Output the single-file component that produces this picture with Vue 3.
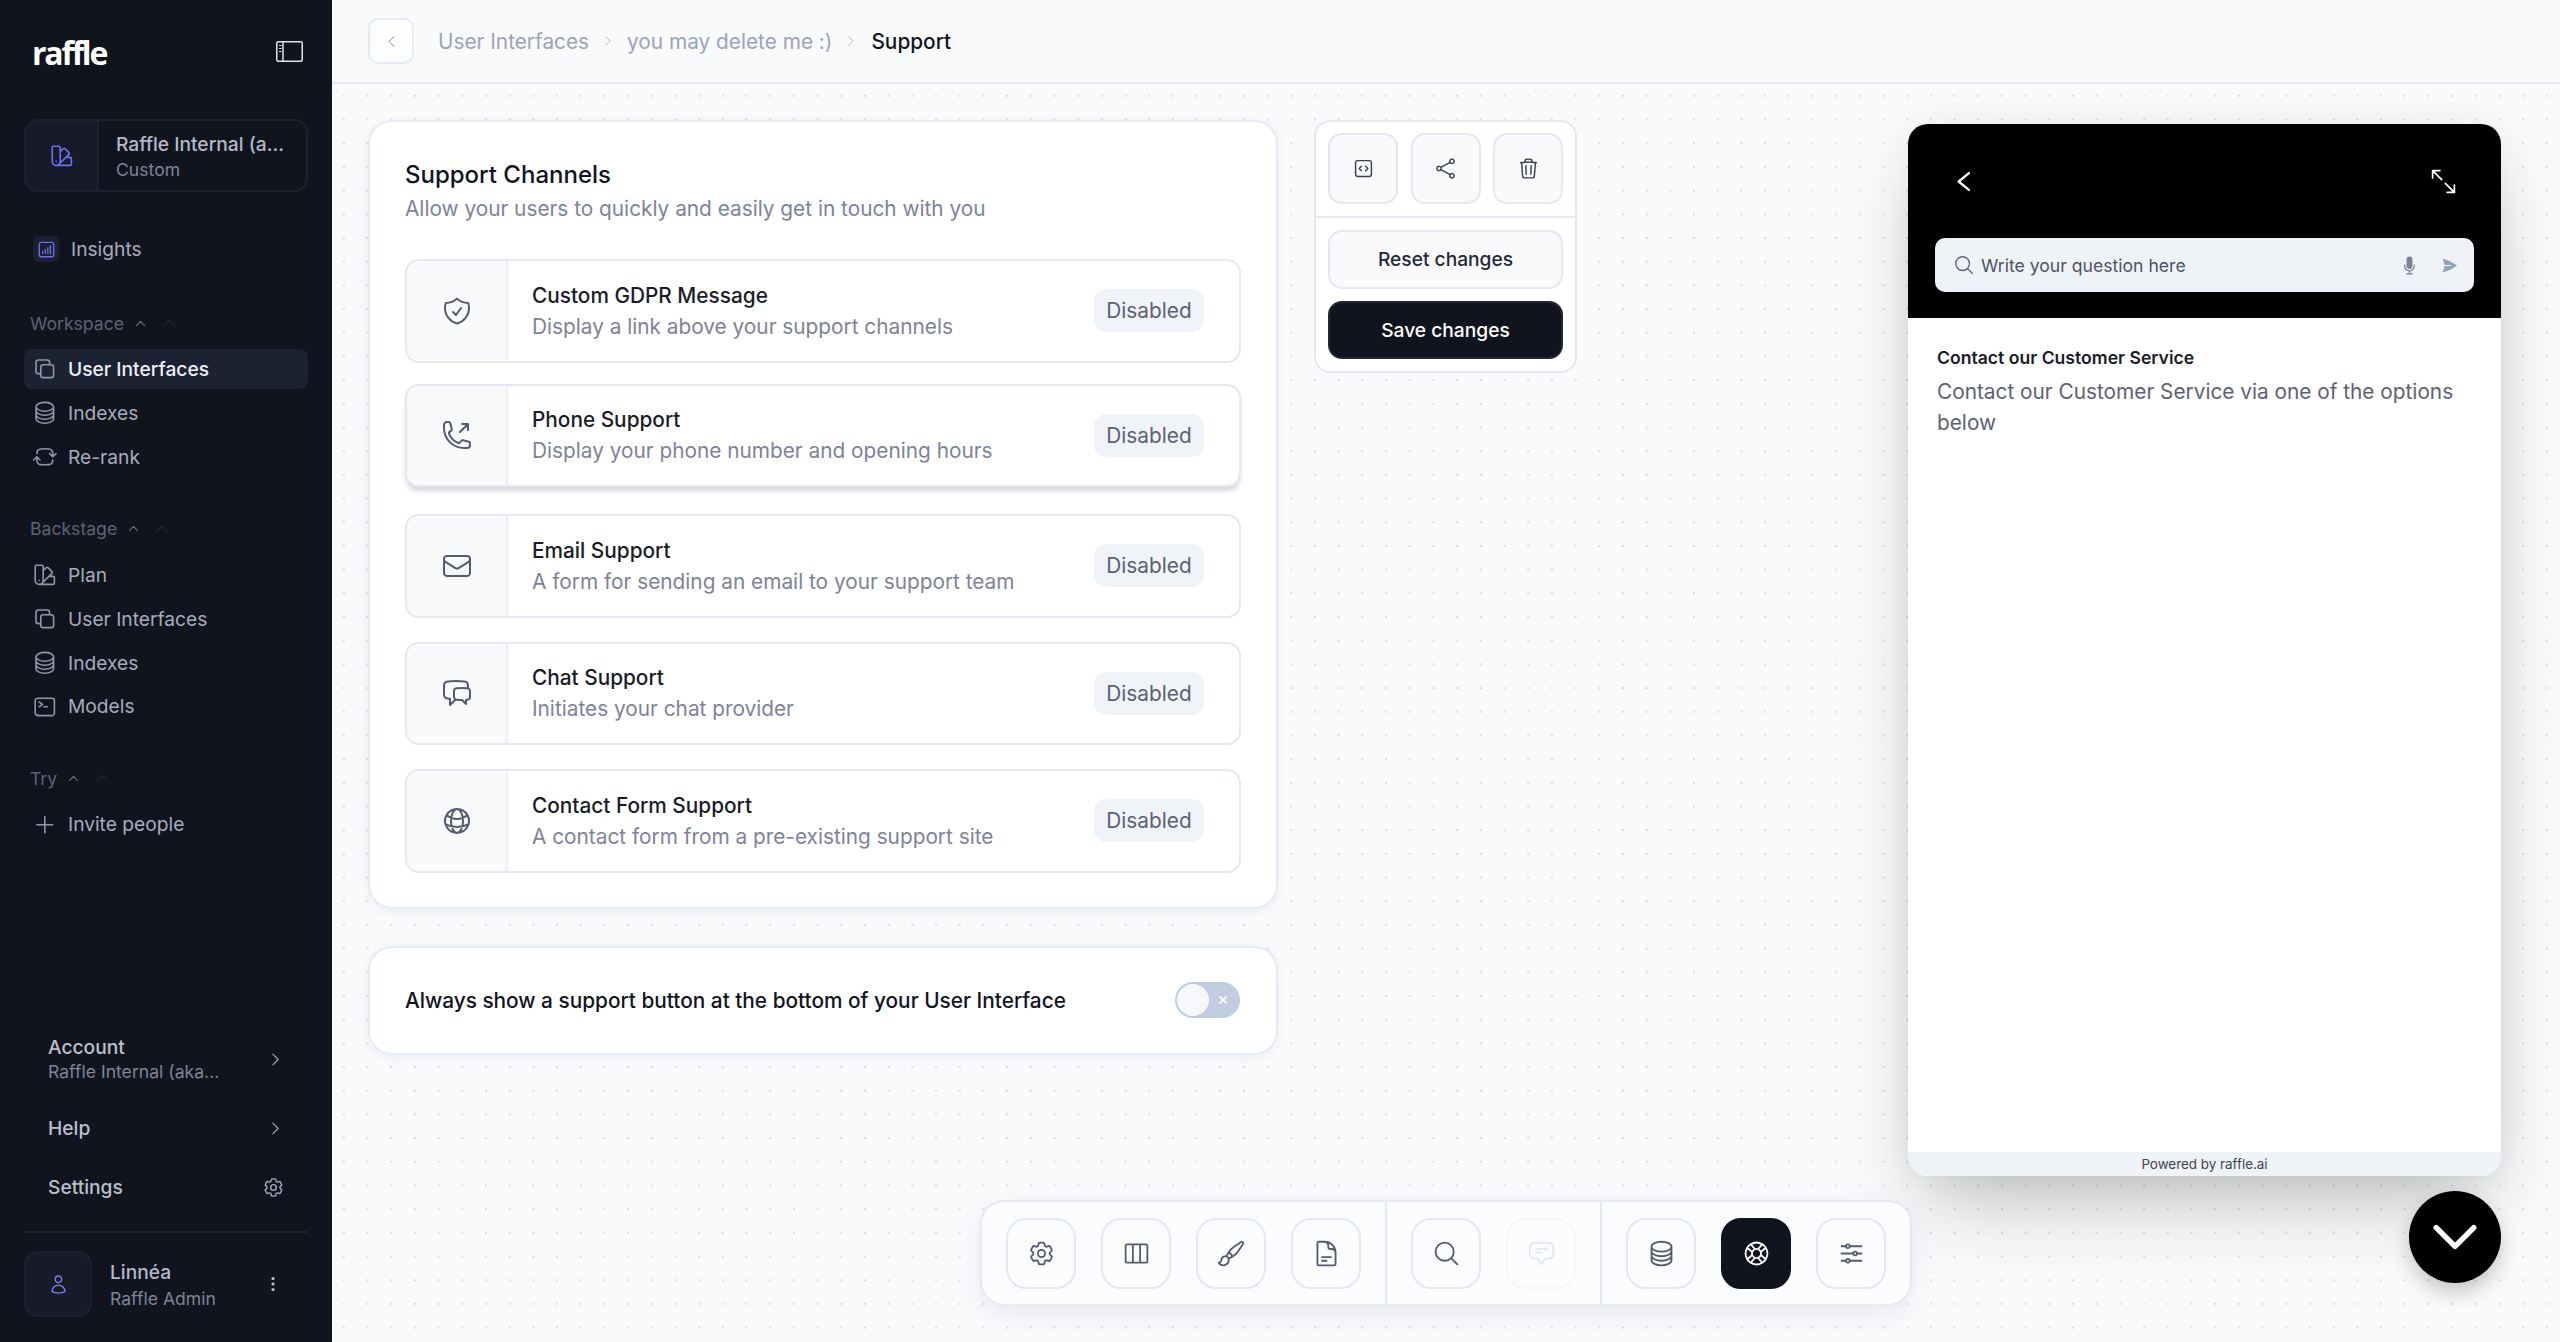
<script setup>
import { h } from 'vue'

const ICONS = {
  gear: 'M9.594 3.94c.09-.542.56-.94 1.11-.94h2.593c.55 0 1.02.398 1.11.94l.213 1.281c.063.374.313.686.645.87.074.04.147.083.22.127.325.196.72.257 1.075.124l1.217-.456a1.125 1.125 0 0 1 1.37.49l1.296 2.247a1.125 1.125 0 0 1-.26 1.431l-1.003.827c-.293.241-.438.613-.43.992a7.723 7.723 0 0 1 0 .255c-.008.378.137.75.43.991l1.004.827c.424.35.534.955.26 1.43l-1.298 2.247a1.125 1.125 0 0 1-1.369.491l-1.217-.456c-.355-.133-.75-.072-1.076.124a6.47 6.47 0 0 1-.22.128c-.331.183-.581.495-.644.869l-.213 1.281c-.09.543-.56.94-1.11.94h-2.594c-.55 0-1.019-.398-1.11-.94l-.213-1.281c-.062-.374-.312-.686-.644-.87a6.52 6.52 0 0 1-.22-.127c-.325-.196-.72-.257-1.076-.124l-1.217.456a1.125 1.125 0 0 1-1.369-.49l-1.297-2.247a1.125 1.125 0 0 1 .26-1.431l1.004-.827c.292-.24.437-.613.43-.991a6.932 6.932 0 0 1 0-.255c.007-.38-.138-.751-.43-.992l-1.004-.827a1.125 1.125 0 0 1-.26-1.43l1.297-2.247a1.125 1.125 0 0 1 1.37-.491l1.216.456c.356.133.751.072 1.076-.124.072-.044.146-.086.22-.128.332-.183.582-.495.644-.869l.214-1.28ZM15 12a3 3 0 1 1-6 0 3 3 0 0 1 6 0Z',
  db: 'M20.25 6.375c0 2.278-3.694 4.125-8.25 4.125S3.75 8.653 3.75 6.375m16.5 0c0-2.278-3.694-4.125-8.25-4.125S3.75 4.097 3.75 6.375m16.5 0v11.25c0 2.278-3.694 4.125-8.25 4.125s-8.25-1.847-8.25-4.125V6.375m16.5 0v3.75m-16.5-3.75v3.75m16.5 0v3.75C20.25 16.153 16.556 18 12 18s-8.25-1.847-8.25-4.125v-3.75m16.5 0c0 2.278-3.694 4.125-8.25 4.125s-8.25-1.847-8.25-4.125',
  buoy: 'M16.712 4.33a9.027 9.027 0 0 1 1.652 1.306c.51.51.944 1.064 1.306 1.652M16.712 4.33l-3.448 4.138m3.448-4.138a9.014 9.014 0 0 0-9.424 0M19.67 7.288l-4.138 3.448m4.138-3.448a9.014 9.014 0 0 1 0 9.424m-4.138-5.976a3.736 3.736 0 0 0-.88-1.388 3.737 3.737 0 0 0-1.388-.88m2.268 2.268a3.765 3.765 0 0 1 0 2.528m-2.268-4.796a3.765 3.765 0 0 0-2.528 0m4.796 4.796c-.181.506-.475.982-.88 1.388a3.736 3.736 0 0 1-1.388.88m2.268-2.268 4.138 3.448m0 0a9.027 9.027 0 0 1-1.306 1.652c-.51.51-1.064.944-1.652 1.306m0 0-3.448-4.138m3.448 4.138a9.014 9.014 0 0 1-9.424 0m5.976-4.138a3.765 3.765 0 0 1-2.528 0m0 0a3.736 3.736 0 0 1-1.388-.88 3.737 3.737 0 0 1-.88-1.388m2.268 2.268L7.288 19.67m0 0a9.024 9.024 0 0 1-1.652-1.306 9.027 9.027 0 0 1-1.306-1.652m0 0 4.138-3.448M4.33 16.712a9.014 9.014 0 0 1 0-9.424m4.138 5.976a3.765 3.765 0 0 1 0-2.528m0 0c.181-.506.475-.982.88-1.388a3.736 3.736 0 0 1 1.388-.88m-2.268 2.268L4.33 7.288m6.406 1.18L7.288 4.33m0 0a9.024 9.024 0 0 0-1.652 1.306A9.025 9.025 0 0 0 4.33 7.288',
  search: 'm21 21-5.197-5.197m0 0A7.5 7.5 0 1 0 5.196 5.196a7.5 7.5 0 0 0 10.607 10.607Z',
  share: 'M7.217 10.907a2.25 2.25 0 1 0 0 2.186m0-2.186c.18.324.283.696.283 1.093s-.103.77-.283 1.093m0-2.186 9.566-5.314m-9.566 7.5 9.566 5.314m0 0a2.25 2.25 0 1 0 3.935 2.186 2.25 2.25 0 0 0-3.935-2.186Zm0-12.814a2.25 2.25 0 1 0 3.933-2.185 2.25 2.25 0 0 0-3.933 2.185Z',
  trash: 'm14.74 9-.346 9m-4.788 0L9.26 9m9.968-3.21c.342.052.682.107 1.022.166m-1.022-.165L18.16 19.673a2.25 2.25 0 0 1-2.244 2.077H8.084a2.25 2.25 0 0 1-2.244-2.077L4.772 5.79m14.456 0a48.108 48.108 0 0 0-3.478-.397m-12 .562c.34-.059.68-.114 1.022-.165m0 0a48.11 48.11 0 0 1 3.478-.397m7.5 0v-.916c0-1.18-.91-2.164-2.09-2.201a51.964 51.964 0 0 0-3.32 0c-1.18.037-2.09 1.022-2.09 2.201v.916m7.5 0a48.667 48.667 0 0 0-7.5 0',
  mail: 'M21.75 6.75v10.5a2.25 2.25 0 0 1-2.25 2.25h-15a2.25 2.25 0 0 1-2.25-2.25V6.75m19.5 0A2.25 2.25 0 0 0 19.5 4.5h-15a2.25 2.25 0 0 0-2.25 2.25m19.5 0v.243a2.25 2.25 0 0 1-1.07 1.916l-7.5 4.615a2.25 2.25 0 0 1-2.36 0L3.32 8.91a2.25 2.25 0 0 1-1.07-1.916V6.75',
  shield: 'M9 12.75 11.25 15 15 9.75m-3-7.036A11.959 11.959 0 0 1 3.598 6 11.99 11.99 0 0 0 3 9.749c0 5.592 3.824 10.29 9 11.623 5.176-1.332 9-6.03 9-11.622 0-1.31-.21-2.571-.598-3.751h-.152c-3.196 0-6.1-1.248-8.25-3.285Z',
  phone: 'M20.25 3.75v4.5m0-4.5h-4.5m4.5 0-6 6m3 12c-8.284 0-15-6.716-15-15V4.5A2.25 2.25 0 0 1 4.5 2.25h1.372c.516 0 .966.351 1.091.852l1.106 4.423c.11.44-.054.902-.417 1.173l-1.293.97a1.062 1.062 0 0 0-.38 1.21 12.035 12.035 0 0 0 7.143 7.143c.441.162.928-.004 1.21-.38l.97-1.293a1.125 1.125 0 0 1 1.173-.417l4.423 1.106c.5.125.852.575.852 1.091V19.5a2.25 2.25 0 0 1-2.25 2.25h-2.25Z',
  chats: 'M20.25 8.511c.884.284 1.5 1.128 1.5 2.097v4.286c0 1.136-.847 2.1-1.98 2.193-.34.027-.68.052-1.02.072v3.091l-3-3c-1.354 0-2.694-.055-4.02-.163a2.115 2.115 0 0 1-.825-.242m9.345-8.334a2.126 2.126 0 0 0-.476-.095 48.64 48.64 0 0 0-8.048 0c-1.131.094-1.976 1.057-1.976 2.192v4.286c0 .837.46 1.58 1.155 1.951m9.345-8.334V6.637c0-1.621-1.152-3.026-2.76-3.235A48.455 48.455 0 0 0 11.25 3c-2.115 0-4.198.137-6.24.402-1.608.209-2.76 1.614-2.76 3.235v6.226c0 1.621 1.152 3.026 2.76 3.235.577.075 1.157.14 1.74.194V21l4.155-4.155',
  globe: 'M12 21a9.004 9.004 0 0 0 8.716-6.747M12 21a9.004 9.004 0 0 1-8.716-6.747M12 21c2.485 0 4.5-4.03 4.5-9S14.485 3 12 3m0 18c-2.485 0-4.5-4.03-4.5-9S9.515 3 12 3m0 0a8.997 8.997 0 0 1 7.843 4.582M12 3a8.997 8.997 0 0 0-7.843 4.582m15.686 0A11.953 11.953 0 0 1 12 10.5c-2.998 0-5.74-1.1-7.843-2.918m15.686 0A8.959 8.959 0 0 1 21 12c0 .778-.099 1.533-.284 2.253m0 0A17.919 17.919 0 0 1 12 16.5c-3.162 0-6.133-.815-8.716-2.247m0 0A9.015 9.015 0 0 1 3 12c0-1.605.42-3.113 1.157-4.418',
  swatch: 'M4.098 19.902a3.75 3.75 0 0 0 5.304 0l6.401-6.402M6.75 21A3.75 3.75 0 0 1 3 17.25V4.125C3 3.504 3.504 3 4.125 3h5.25c.621 0 1.125.504 1.125 1.125v4.072M6.75 21a3.75 3.75 0 0 0 3.75-3.75V8.197M6.75 21h13.125c.621 0 1.125-.504 1.125-1.125v-5.25c0-.621-.504-1.125-1.125-1.125h-4.072M10.5 8.197l2.88-2.88c.438-.439 1.15-.439 1.59 0l3.712 3.713c.44.44.44 1.152 0 1.59l-2.879 2.88M6.75 17.25h.008v.008H6.75v-.008Z',
  stack: 'M16.5 8.25V6a2.25 2.25 0 0 0-2.25-2.25H6A2.25 2.25 0 0 0 3.75 6v8.25A2.25 2.25 0 0 0 6 16.5h2.25m8.25-8.25H18a2.25 2.25 0 0 1 2.25 2.25V18A2.25 2.25 0 0 1 18 20.25h-7.5A2.25 2.25 0 0 1 8.25 18v-1.5m8.25-8.25h-6a2.25 2.25 0 0 0-2.25 2.25v6',
  rerank: 'M19.5 12c0-1.232-.046-2.453-.138-3.662a4.006 4.006 0 0 0-3.7-3.7 48.678 48.678 0 0 0-7.324 0 4.006 4.006 0 0 0-3.7 3.7c-.017.22-.032.441-.046.662M19.5 12l3-3m-3 3-3-3m-12 3c0 1.232.046 2.453.138 3.662a4.006 4.006 0 0 0 3.7 3.7 48.656 48.656 0 0 0 7.324 0 4.006 4.006 0 0 0 3.7-3.7c.017-.22.032-.441.046-.662M4.5 12l3 3m-3-3-3 3',
  term: 'm6.75 7.5 3 2.25-3 2.25m4.5 0h3m-9 8.25h13.5A2.25 2.25 0 0 0 21 17.75V6.25A2.25 2.25 0 0 0 18.75 4H5.25A2.25 2.25 0 0 0 3 6.25v11.5A2.25 2.25 0 0 0 5.25 20Z',
  plus: 'M12 4.5v15m7.5-7.5h-15',
  user: 'M15.75 6a3.75 3.75 0 1 1-7.5 0 3.75 3.75 0 0 1 7.5 0ZM4.501 20.118a7.5 7.5 0 0 1 14.998 0A17.933 17.933 0 0 1 12 21.75c-2.676 0-5.216-.584-7.499-1.632Z',
  dots: 'M12 6.75a.75.75 0 1 1 0-1.5.75.75 0 0 1 0 1.5ZM12 12.75a.75.75 0 1 1 0-1.5.75.75 0 0 1 0 1.5ZM12 18.75a.75.75 0 1 1 0-1.5.75.75 0 0 1 0 1.5Z',
  code: 'M14.25 9.75 16.5 12l-2.25 2.25m-4.5 0L7.5 12l2.25-2.25M6 20.25h12A2.25 2.25 0 0 0 20.25 18V6A2.25 2.25 0 0 0 18 3.75H6A2.25 2.25 0 0 0 3.75 6v12A2.25 2.25 0 0 0 6 20.25Z',
  columns: 'M9 4.5v15m6-15v15m-10.875 0h15.75c.621 0 1.125-.504 1.125-1.125V5.625c0-.621-.504-1.125-1.125-1.125H4.125C3.504 4.5 3 5.004 3 5.625v12.75c0 .621.504 1.125 1.125 1.125Z',
  brush: 'M9.53 16.122a3 3 0 0 0-5.78 1.128 2.25 2.25 0 0 1-2.4 2.245 4.5 4.5 0 0 0 8.4-2.245c0-.399-.078-.78-.22-1.128Zm0 0a15.998 15.998 0 0 0 3.388-1.62m-5.043-.025a15.994 15.994 0 0 1 1.622-3.395m3.42 3.42a15.995 15.995 0 0 0 4.764-4.648l3.876-5.814a1.151 1.151 0 0 0-1.597-1.597L14.146 6.32a15.996 15.996 0 0 0-4.649 4.763m3.42 3.42a6.776 6.776 0 0 0-3.42-3.42',
  doc: 'M19.5 14.25v-2.625a3.375 3.375 0 0 0-3.375-3.375h-1.5A1.125 1.125 0 0 1 13.5 7.125v-1.5a3.375 3.375 0 0 0-3.375-3.375H8.25m0 12.75h7.5m-7.5 3H12M10.5 2.25H5.625c-.621 0-1.125.504-1.125 1.125v17.25c0 .621.504 1.125 1.125 1.125h12.75c.621 0 1.125-.504 1.125-1.125V11.25a9 9 0 0 0-9-9Z',
  chat: 'M7.5 8.25h9m-9 3H12m-9.75 1.51c0 1.6 1.123 2.994 2.707 3.227 1.129.166 2.27.293 3.423.379.35.026.67.21.865.501L12 21l2.755-4.133a1.14 1.14 0 0 1 .865-.501 48.172 48.172 0 0 0 3.423-.379c1.584-.233 2.707-1.626 2.707-3.228V6.741c0-1.602-1.123-2.995-2.707-3.228A48.394 48.394 0 0 0 12 3c-2.392 0-4.744.175-7.043.513C3.373 3.746 2.25 5.14 2.25 6.741v6.018Z',
  sliders: 'M10.5 6h9.75M10.5 6a1.5 1.5 0 1 1-3 0m3 0a1.5 1.5 0 1 0-3 0M3.75 6H7.5m3 12h9.75m-9.75 0a1.5 1.5 0 0 1-3 0m3 0a1.5 1.5 0 0 0-3 0m-3.75 0H7.5m9-6h3.75m-3.75 0a1.5 1.5 0 0 1-3 0m3 0a1.5 1.5 0 0 0-3 0m-9.75 0h9.75',
  chart: 'M7.5 14.25v2.25m3-4.5v4.5m3-6.75v6.75m3-9v9M6 20.25h12A2.25 2.25 0 0 0 20.25 18V6A2.25 2.25 0 0 0 18 3.75H6A2.25 2.25 0 0 0 3.75 6v12A2.25 2.25 0 0 0 6 20.25Z',
  up: 'm4.5 15.75 7.5-7.5 7.5 7.5',
  right: 'm8.25 4.5 7.5 7.5-7.5 7.5',
  left: 'M15.75 19.5 8.25 12l7.5-7.5',
  wleft: 'M16.5 5 8 12l8.5 7',
  down: 'm19.5 8.25-7.5 7.5-7.5-7.5',
  expand: 'M3 3v6M3 3h6M3 3l7.5 7.5M21 21v-6M21 21h-6M21 21l-7.5-7.5',
  mic: 'M8.25 4.5a3.75 3.75 0 1 1 7.5 0v8.25a3.75 3.75 0 1 1-7.5 0V4.5ZM6 10.5a.75.75 0 0 1 .75.75v1.5a5.25 5.25 0 1 0 10.5 0v-1.5a.75.75 0 0 1 1.5 0v1.5a6.751 6.751 0 0 1-6 6.709v2.291h3a.75.75 0 0 1 0 1.5h-7.5a.75.75 0 0 1 0-1.5h3v-2.291a6.751 6.751 0 0 1-6-6.709v-1.5A.75.75 0 0 1 6 10.5Z',
  send: 'M3.478 2.404a.75.75 0 0 0-.926.941l2.432 7.905H13.5a.75.75 0 0 1 0 1.5H4.984l-2.432 7.905a.75.75 0 0 0 .926.94 60.519 60.519 0 0 0 18.445-8.986.75.75 0 0 0 0-1.218A60.517 60.517 0 0 0 3.478 2.404Z',
}

const Ico = (p) =>
  h('svg', {
    viewBox: '0 0 24 24',
    width: p.size,
    height: p.size,
    fill: p.solid !== undefined ? 'currentColor' : 'none',
    stroke: p.solid !== undefined ? 'none' : 'currentColor',
    'stroke-width': p.sw || 1.5,
    'stroke-linecap': 'round',
    'stroke-linejoin': 'round',
  }, [h('path', { d: ICONS[p.name] })])

const navGroups = [
  { label: 'Workspace', items: [
    { icon: 'stack', text: 'User Interfaces', active: true },
    { icon: 'db', text: 'Indexes' },
    { icon: 'rerank', text: 'Re-rank' },
  ] },
  { label: 'Backstage', items: [
    { icon: 'swatch', text: 'Plan' },
    { icon: 'stack', text: 'User Interfaces' },
    { icon: 'db', text: 'Indexes' },
    { icon: 'term', text: 'Models' },
  ] },
  { label: 'Try', items: [
    { icon: 'plus', text: 'Invite people' },
  ] },
]

const channels = [
  { icon: 'shield', title: 'Custom GDPR Message', sub: 'Display a link above your support channels' },
  { icon: 'phone', title: 'Phone Support', sub: 'Display your phone number and opening hours', lifted: true },
  { icon: 'mail', title: 'Email Support', sub: 'A form for sending an email to your support team' },
  { icon: 'chats', title: 'Chat Support', sub: 'Initiates your chat provider' },
  { icon: 'globe', title: 'Contact Form Support', sub: 'A contact form from a pre-existing support site' },
]

const toolGroups = [
  [{ icon: 'gear' }, { icon: 'columns' }, { icon: 'brush' }, { icon: 'doc' }],
  [{ icon: 'search' }, { icon: 'chat', disabled: true }],
  [{ icon: 'db' }, { icon: 'buoy', active: true }, { icon: 'sliders' }],
]
</script>

<template>
  <div class="app">
    <aside class="sidebar">
      <div class="brand">
        <span class="logo">raffle</span>
        <svg class="panel-ico" width="27" height="21" viewBox="0 0 27 21" fill="none" stroke="currentColor">
          <rect x="0.75" y="0.75" width="25.5" height="19.5" rx="1.5" stroke-width="1.5" />
          <path d="M7 1v19" stroke-width="1.5" />
          <path d="M3 4.5h2.5M3 7.5h2.5M3 10.5h2.5" stroke-width="1.2" />
        </svg>
      </div>

      <div class="org">
        <div class="org-ico"><Ico name="swatch" size="25.6" /></div>
        <div class="org-text">
          <div class="org-name">Raffle Internal (a...</div>
          <div class="org-type">Custom</div>
        </div>
      </div>

      <div class="insights">
        <span class="insights-ico"><Ico name="chart" size="21" /></span>
        <span>Insights</span>
      </div>

      <section v-for="g in navGroups" :key="g.label" class="nav-group">
        <div class="nav-label">
          <span>{{ g.label }}</span>
          <Ico name="up" size="13" sw="2" class="caret" />
          <Ico name="up" size="18" sw="2" class="caret-ghost" />
        </div>
        <div class="nav-items">
          <div v-for="it in g.items" :key="it.text" class="nav-item" :class="{ active: it.active }">
            <Ico :name="it.icon" size="25.6" />
            <span>{{ it.text }}</span>
          </div>
        </div>
      </section>

      <div class="side-bottom">
        <div class="bottom-row account">
          <div>
            <div class="bottom-title">Account</div>
            <div class="bottom-sub">Raffle Internal (aka...</div>
          </div>
          <Ico name="right" size="17" class="bottom-ico" />
        </div>
        <div class="bottom-row help">
          <div class="bottom-title">Help</div>
          <Ico name="right" size="17" class="bottom-ico" />
        </div>
        <div class="bottom-row settings">
          <div class="bottom-title">Settings</div>
          <Ico name="gear" size="23" class="bottom-ico gear" />
        </div>
        <div class="user">
          <div class="avatar"><Ico name="user" size="21" /></div>
          <div class="user-text">
            <div class="user-name">Linnéa</div>
            <div class="user-role">Raffle Admin</div>
          </div>
          <Ico name="dots" size="22" sw="2" class="user-dots" />
        </div>
      </div>
    </aside>

    <main class="main">
      <header class="topbar">
        <button class="back"><Ico name="left" size="15" /></button>
        <nav class="crumbs">
          <span>User Interfaces</span>
          <Ico name="right" size="14" class="crumb-sep" />
          <span>you may delete me :)</span>
          <Ico name="right" size="14" class="crumb-sep" />
          <span class="current">Support</span>
        </nav>
      </header>

      <div class="canvas">
        <div class="left-col">
          <section class="card channels">
            <h2>Support Channels</h2>
            <p class="lead">Allow your users to quickly and easily get in touch with you</p>
            <div class="rows">
              <div v-for="c in channels" :key="c.title" class="row" :class="{ lifted: c.lifted }">
                <div class="row-ico"><Ico :name="c.icon" size="32" /></div>
                <div class="row-text">
                  <div class="row-title">{{ c.title }}</div>
                  <div class="row-sub">{{ c.sub }}</div>
                </div>
                <span class="badge">Disabled</span>
              </div>
            </div>
          </section>

          <section class="card always">
            <span>Always show a support button at the bottom of your User Interface</span>
            <span class="toggle"><i class="knob"></i><b class="toggle-x">×</b></span>
          </section>
        </div>

        <aside class="actions">
          <div class="actions-top">
            <button class="act"><Ico name="code" size="23" /></button>
            <button class="act"><Ico name="share" size="23" /></button>
            <button class="act"><Ico name="trash" size="23" /></button>
          </div>
          <div class="actions-bottom">
            <button class="wide">Reset changes</button>
            <button class="wide primary">Save changes</button>
          </div>
        </aside>

        <section class="widget">
          <div class="widget-head">
            <div class="widget-nav">
              <Ico name="wleft" size="29" sw="1.9" />
              <Ico name="expand" size="29" sw="1.4" />
            </div>
            <div class="widget-search">
              <Ico name="search" size="22" class="w-search" />
              <span class="w-placeholder">Write your question here</span>
              <Ico name="mic" size="19" solid class="w-mic" />
              <Ico name="send" size="17" solid class="w-send" />
            </div>
          </div>
          <div class="widget-body">
            <div class="w-title">Contact our Customer Service</div>
            <p class="w-text">Contact our Customer Service via one of the options below</p>
          </div>
          <div class="widget-foot">Powered by raffle.ai</div>
        </section>

        <div class="toolbar">
          <div v-for="(g, i) in toolGroups" :key="i" class="tool-group">
            <button
              v-for="t in g"
              :key="t.icon"
              class="tool"
              :class="{ active: t.active, disabled: t.disabled }"
            >
              <Ico :name="t.icon" size="29" />
            </button>
          </div>
        </div>

        <button class="fab"><Ico name="down" size="60" sw="2.2" /></button>
      </div>
    </main>
  </div>
</template>

<style>
html, body { background: #f9fafc; }
</style>

<style scoped>
* { box-sizing: border-box; }
button { font: inherit; padding: 0; cursor: pointer; }
h2, p { margin: 0; }
svg { display: block; flex: none; }

.app {
  display: flex;
  width: 100vw;
  height: 100vh;
  overflow: hidden;
  font-family: Inter, "Noto Sans", sans-serif;
  color: #11141f;
}

/* Sidebar */
.sidebar {
  width: 332px;
  flex: none;
  background: #11141f;
  padding: 40px 24px 25px;
  display: flex;
  flex-direction: column;
  color: #a7acbd;
}
.brand {
  display: flex;
  align-items: center;
  justify-content: space-between;
  height: 26px;
  padding: 0 5px 0 8px;
  color: #fff;
}
.logo {
  font-family: "Open Sans", sans-serif;
  font-weight: 700;
  font-size: 32px;
  letter-spacing: -2.2px;
  line-height: 26px;
  color: #fff;
}
.panel-ico { color: #dfe3ec; margin-top: -4px; }

.org {
  display: flex;
  height: 73px;
  margin-top: 53px;
  border: 2px solid #1c2130;
  border-radius: 14px;
  overflow: hidden;
}
.org-ico {
  width: 73px;
  background: #171b29;
  border-right: 2px solid #1c2130;
  display: flex;
  align-items: center;
  justify-content: center;
  color: #6c6ff0;
}
.org-text { padding: 2px 0 0 17px; display: flex; flex-direction: column; justify-content: center; }
.org-name { font-size: 19.2px; line-height: 27px; font-weight: 500; color: #b4b9c8; white-space: nowrap; }
.org-type { font-size: 17.6px; line-height: 24px; color: #7f8496; }

.insights {
  display: flex;
  align-items: center;
  gap: 12px;
  height: 26px;
  margin-top: 44px;
  padding-left: 9px;
  font-size: 19.2px;
  color: #a7acbd;
}
.insights-ico {
  width: 26px;
  height: 26px;
  background: #1c2030;
  border-radius: 5px;
  display: flex;
  align-items: center;
  justify-content: center;
  color: #6c6ff0;
}

.nav-group { margin-top: 40px; }
.nav-group:first-of-type { margin-top: 49px; }
.nav-label {
  display: flex;
  align-items: center;
  height: 24px;
  padding-left: 6px;
  font-size: 17.6px;
  color: #5f6274;
}
.caret { margin-left: 10px; color: #6d7080; }
.caret-ghost { margin-left: 13px; color: #1e2230; }
.nav-items { margin-top: 14px; display: flex; flex-direction: column; gap: 3.9px; }
.nav-item {
  display: flex;
  align-items: center;
  gap: 10.4px;
  height: 40px;
  padding-left: 8px;
  border-radius: 8px;
  font-size: 19.2px;
  color: #a7acbd;
}
.nav-item.active { background: #1d2233; color: #eef0f5; font-weight: 500; }
.nav-item svg { color: #9196a8; }

.side-bottom { margin-top: auto; }
.bottom-row {
  display: flex;
  align-items: center;
  justify-content: space-between;
  padding: 0 22px 0 24px;
}
.account { height: 50px; }
.help { height: 40px; margin-top: 24px; }
.settings { height: 40px; margin-top: 19px; }
.bottom-title { font-size: 19.2px; line-height: 26px; font-weight: 500; color: #bcc0cd; }
.bottom-sub { font-size: 17.6px; line-height: 24px; color: #7f8496; white-space: nowrap; }
.bottom-ico { color: #a7acbd; margin-right: 2px; }
.bottom-ico.gear { margin-right: 1px; }
.user {
  display: flex;
  align-items: center;
  height: 86px;
  margin-top: 24px;
  padding-top: 18px;
  border-top: 2px solid #1c2130;
}
.avatar {
  width: 68px;
  height: 66px;
  background: #171b29;
  border: 2px solid #1c2130;
  border-radius: 14px;
  display: flex;
  align-items: center;
  justify-content: center;
  color: #7d7ff2;
}
.user-text { margin-left: 18px; padding-top: 2px; flex: 1; }
.user-name { font-size: 19.2px; line-height: 27px; font-weight: 500; color: #b4b9c8; }
.user-role { font-size: 17.6px; line-height: 26px; color: #7f8496; }
.user-dots { color: #c7cbd6; margin-right: 24px; }

/* Main */
.main { flex: 1; min-width: 0; display: flex; flex-direction: column; }
.topbar {
  height: 84px;
  flex: none;
  display: flex;
  align-items: center;
  gap: 24px;
  padding: 0 36px;
  background: #f9fafc;
  border-bottom: 2px solid #e6eaf2;
}
.back {
  width: 46px;
  height: 46px;
  background: #fcfdfe;
  border: 2px solid #e6eaf2;
  border-radius: 10px;
  display: flex;
  align-items: center;
  justify-content: center;
  color: #767a8e;
}
.crumbs {
  display: flex;
  align-items: center;
  gap: 12px;
  font-size: 20.8px;
  color: #9da3b6;
}
.crumb-sep { color: #a9aebf; }
.current { color: #11141f; font-weight: 500; margin-left: 1px; }

.canvas {
  position: relative;
  flex: 1;
  min-height: 0;
  display: flex;
  align-items: flex-start;
  padding: 36px 59px 0 36px;
  background-color: #f9fafc;
  background-image: radial-gradient(circle at center, #d6dce7 0.9px, transparent 1.3px);
  background-size: 23.7px 23.7px;
}

.left-col { width: 910px; flex: none; display: flex; flex-direction: column; gap: 37px; }
.card {
  background: #fff;
  border: 2px solid #e7ebf3;
  border-radius: 24px;
  box-shadow: 0 3px 12px rgba(30, 50, 90, 0.06);
}
.channels { padding: 37px 35px 34px; }
.channels h2 { font-size: 24px; line-height: 32px; font-weight: 500; color: #11141f; }
.lead { font-size: 20.8px; line-height: 30px; margin-top: 3px; color: #7e8299; }
.rows { margin-top: 35px; display: flex; flex-direction: column; gap: 24px; }
.row {
  display: flex;
  align-items: center;
  height: 103.5px;
  background: #fff;
  border: 2px solid #e3e8f1;
  border-radius: 14px;
  overflow: hidden;
}
.row.lifted {
  transform: translateY(-3px);
  box-shadow: 0 5px 5px -1px rgba(40, 50, 80, 0.2);
}
.row-ico {
  width: 101px;
  height: 100%;
  flex: none;
  background: #f9fafc;
  border-right: 2px solid #eceff5;
  display: flex;
  align-items: center;
  justify-content: center;
  color: #565a6e;
}
.row-text { flex: 1; padding: 1px 0 0 24px; }
.row-title { font-size: 20.8px; line-height: 30px; font-weight: 500; color: #191c28; }
.row-sub { font-size: 20.8px; line-height: 30px; margin-top: 1px; color: #7e8299; }
.badge {
  width: 110px;
  height: 43px;
  margin-right: 35px;
  background: #f0f3f8;
  border-radius: 12px;
  display: flex;
  align-items: center;
  justify-content: center;
  font-size: 20.8px;
  color: #5c6074;
}

.always {
  height: 109px;
  display: flex;
  align-items: center;
  justify-content: space-between;
  padding: 0 36px 0 35px;
  font-size: 20.8px;
  font-weight: 500;
  color: #11141f;
}
.toggle {
  position: relative;
  width: 65px;
  height: 36px;
  background: #c1cce0;
  border-radius: 18px;
  display: flex;
  align-items: center;
}
.knob {
  width: 32px;
  height: 32px;
  margin-left: 2px;
  background: #f6f8fb;
  border-radius: 50%;
}
.toggle-x {
  position: absolute;
  right: 11px;
  top: 8px;
  font: 400 18px/18px Inter, sans-serif;
  color: #fff;
}

.actions {
  width: 263px;
  flex: none;
  margin-left: 36px;
  background: #fff;
  border: 2px solid #e3e8f1;
  border-radius: 16px;
}
.actions-top {
  display: flex;
  justify-content: space-between;
  padding: 11px 12px 12px;
  border-bottom: 2px solid #e3e8f1;
}
.act {
  width: 70px;
  height: 71px;
  background: #f9fafc;
  border: 2px solid #e3e8f1;
  border-radius: 14px;
  display: flex;
  align-items: center;
  justify-content: center;
  color: #3d4152;
}
.actions-bottom { display: flex; flex-direction: column; gap: 12px; padding: 12px; }
.wide {
  height: 58.5px;
  background: #f9fafc;
  border: 2px solid #e3e8f1;
  border-radius: 14px;
  font-size: 19.2px;
  font-weight: 500;
  color: #242838;
}
.wide.primary { background: #11141f; border-color: #23262f; color: #fff; }

/* Widget */
.widget {
  width: 593px;
  height: 1052px;
  margin-left: auto;
  margin-top: 4px;
  flex: none;
  display: flex;
  flex-direction: column;
  background: #fff;
  border-radius: 20px;
  overflow: hidden;
  box-shadow: 0 40px 80px -19px rgba(0, 0, 0, 0.25), 0 0 40px rgba(0, 0, 0, 0.05);
}
.widget-head { height: 194px; flex: none; background: #000; padding: 0 27px; }
.widget-nav {
  display: flex;
  align-items: center;
  justify-content: space-between;
  height: 114px;
  padding: 0 16.5px 0 14px;
  color: #fff;
}
.widget-search {
  display: flex;
  align-items: center;
  height: 54px;
  background: #eff2f7;
  border-radius: 10px;
  padding: 0 16px 0 18px;
  color: #60647a;
}
.w-search { margin-right: 6px; }
.w-placeholder { flex: 1; font-size: 17.6px; color: #4e5265; }
.w-mic { color: #7e8299; margin-right: 22px; }
.w-send { color: #94a3bd; }
.widget-body { flex: 1; padding: 28px 29px; }
.w-title { font-size: 17.6px; line-height: 24px; font-weight: 600; color: #191c28; }
.w-text { font-size: 20.8px; line-height: 31px; margin-top: 6px; color: #5d6175; }
.widget-foot {
  height: 24px;
  flex: none;
  background: #eff2f7;
  display: flex;
  align-items: center;
  justify-content: center;
  font-size: 13.4px;
  color: #41444f;
}

/* Floating toolbar */
.toolbar {
  position: absolute;
  left: 50%;
  bottom: 36px;
  transform: translateX(-50%);
  display: flex;
  height: 106px;
  background: #fbfcfe;
  border: 2px solid #e5eaf2;
  border-radius: 24px;
  box-shadow: 0 8px 24px rgba(30, 50, 90, 0.08);
}
.tool-group {
  display: flex;
  align-items: center;
  gap: 25px;
  padding: 0 24px;
  border-right: 2px solid #e5eaf2;
}
.tool-group:last-child { border-right: 0; }
.tool {
  width: 70px;
  height: 71px;
  background: transparent;
  border: 2px solid #e3e8f1;
  border-radius: 20px;
  display: flex;
  align-items: center;
  justify-content: center;
  color: #565a6e;
}
.tool.active { background: #11141f; border-color: #11141f; color: #fff; }
.tool.disabled { border-color: #f4f6f9; color: #e2e7f0; }

.fab {
  position: absolute;
  right: 59px;
  bottom: 59px;
  width: 92px;
  height: 92px;
  border: 0;
  border-radius: 50%;
  background: #000;
  color: #fff;
  display: flex;
  align-items: center;
  justify-content: center;
  box-shadow: 0 10px 20px rgba(0, 0, 0, 0.2);
}
</style>
